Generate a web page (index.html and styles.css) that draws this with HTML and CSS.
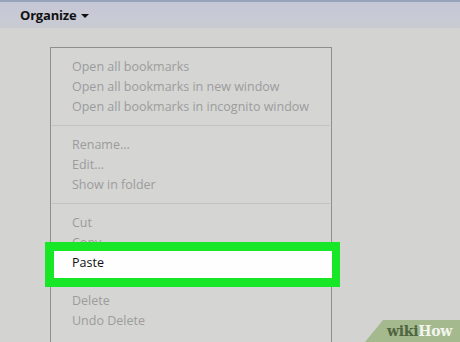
FILE: index.html
```html
<!DOCTYPE html>
<html>
<head>
<meta charset="utf-8">
<link rel="stylesheet" href="styles.css">
</head>
<body>
<div class="toolbar">
  <span class="organize">Organize</span>
  <span class="caret"></span>
</div>
<div class="content">
  <div class="menu">
    <div class="group">
      <div class="item">Open all bookmarks</div>
      <div class="item">Open all bookmarks in new window</div>
      <div class="item">Open all bookmarks in incognito window</div>
    </div>
    <div class="sep"></div>
    <div class="group">
      <div class="item">Rename...</div>
      <div class="item">Edit...</div>
      <div class="item">Show in folder</div>
    </div>
    <div class="sep"></div>
    <div class="group">
      <div class="item">Cut</div>
      <div class="item">Copy</div>
      <div class="item paste">Paste</div>
    </div>
    <div class="sep"></div>
    <div class="group">
      <div class="item">Delete</div>
      <div class="item">Undo Delete</div>
    </div>
  </div>
</div>
<div class="logo"><span class="wiki">wiki</span><span class="how">How</span></div>
</body>
</html>
```
FILE: styles.css
```css
html, body {
  margin: 0;
  padding: 0;
}
body {
  width: 460px;
  height: 342px;
  overflow: hidden;
  background: #d3d3d2;
  font-family: "Open Sans", "Liberation Sans", sans-serif;
  position: relative;
}
.toolbar {
  height: 28px;
  box-sizing: border-box;
  border-top: 2px solid #97a3bb;
  background: linear-gradient(#c5c7d6, #c9cbd3);
  display: flex;
  align-items: center;
  padding-left: 20px;
  gap: 5px;
}
.organize {
  font-weight: 700;
  font-size: 13px;
  color: #111;
  letter-spacing: -0.2px;
}
.caret {
  width: 0;
  height: 0;
  border-left: 4px solid transparent;
  border-right: 4px solid transparent;
  border-top: 4px solid #111;
  margin-top: 1px;
}
.content {
  padding-top: 19px;
  padding-left: 50px;
}
.menu {
  width: 282px;
  height: 295px;
  border: 1px solid #8f8f8f;
  border-bottom: none;
  background: #d5d5d4;
  padding-top: 9px;
  box-sizing: border-box;
}
.item {
  height: 20px;
  line-height: 20px;
  padding-left: 21px;
  font-size: 12.5px;
  color: #9c9c9c;
  white-space: nowrap;
}
.sep {
  height: 1px;
  background: #c2c2c2;
  margin: 8px 1px 9px 1px;
}
.item.paste {
  position: relative;
  z-index: 0;
  color: #111;
}
.item.paste::before {
  content: "";
  position: absolute;
  z-index: -1;
  left: -6px;
  top: -11px;
  width: 295px;
  height: 45px;
  box-sizing: border-box;
  border: 9px solid #17e727;
  border-right-width: 8px;
  background: #fefefe;
}
.logo {
  position: absolute;
  right: 0;
  bottom: 0;
  width: 95px;
  height: 22px;
  background: #a5b98f;
  clip-path: polygon(18px 0, 100% 0, 100% 100%, 0 100%);
  display: flex;
  align-items: center;
  padding-left: 22px;
  box-sizing: border-box;
  font-family: "DejaVu Serif", "Liberation Serif", serif;
  font-weight: 700;
  font-size: 14px;
  letter-spacing: -0.3px;
}
.wiki {
  color: #4f6540;
}
.how {
  color: #f2f5ee;
}
```
